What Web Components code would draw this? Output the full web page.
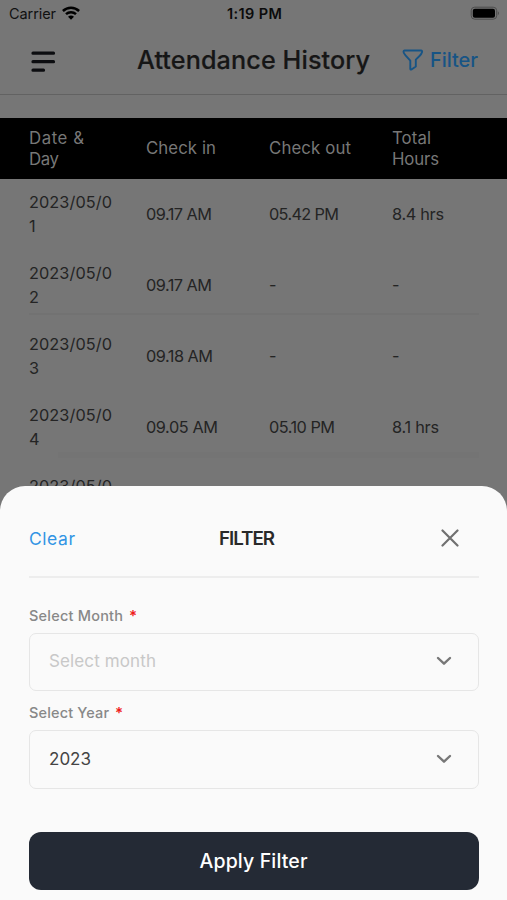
<!DOCTYPE html>
<html lang="en">
<head>
<meta charset="utf-8">
<title>Attendance History</title>
<style>
html,body{margin:0;height:900px;overflow:hidden;background:#767676}
body{font-family:Inter,"Liberation Sans",sans-serif}
</style>
</head>
<body>
<attendance-app></attendance-app>
<script>
const define = (name, html, setup) => customElements.define(name, class extends HTMLElement {
  connectedCallback() {
    if (this.shadowRoot) return;
    this.attachShadow({mode: 'open'}).innerHTML = html;
    if (setup) setup.call(this, this.shadowRoot);
  }
});

/* Text tracked out or in so that it spans the width given in "w". */
define('tracked-text', `<style>:host{display:inline-block;white-space:pre}span{display:inline-block}</style><span></span>`, function (root) {
  const s = root.querySelector('span');
  s.textContent = this.getAttribute('text');
  const w = +this.getAttribute('w');
  if (!w) return;
  const n = s.textContent.length;
  s.style.letterSpacing = n > 1 ? (w - s.getBoundingClientRect().width) / (n - 1) + 'px' : '0';
  this.style.width = w + 'px';
});

define('status-bar', `<style>
:host{display:grid;grid-template-columns:1fr auto 1fr;align-items:center;height:28px;padding:0 7px 2px 9px;box-sizing:border-box;font-size:14.5px;color:#111}
.l{display:flex;align-items:center;gap:6px}.t{font-weight:600;color:#0b0b0b}.r{justify-self:end;display:flex}
</style>
<div class="l"><tracked-text text="Carrier" w="47"></tracked-text>
<svg width="18" height="14" viewBox="0 0 18 14" fill="none" stroke="#000" stroke-width="2.5"><path d="M.9 5C5.5.7 12.500.7 17.100 5M4 8.200C6.800 5.600 11.200 5.600 14 8.200"/><path d="M9 13.700 6 10.700Q9 8.300 12 10.700Z" fill="#000" stroke="none"/></svg></div>
<tracked-text class="t" text="1:19 PM" w="55"></tracked-text>
<div class="r"><svg width="30" height="15" viewBox="0 0 30 15"><rect x="1.200" y="1.200" width="25.500" height="12" rx="3.500" fill="none" stroke="#4c4c4c"/><rect x="2.800" y="2.800" width="22.200" height="8.900" rx="2" fill="#000"/><path d="M27.900 5.200Q30 7.200 27.900 9.200Z" fill="#4c4c4c"/></svg></div>`);

define('nav-bar', `<style>
:host{display:grid;grid-template-columns:106px 233px 1fr;align-items:center;height:67px;padding:0 29px 3px 31px;box-sizing:border-box;border-bottom:1.500px solid #626262}
svg{display:block}.t{font-size:25.200px;font-weight:500;color:#161616;-webkit-text-stroke:.2px #161616;padding-top:1px}
.f{display:flex;justify-content:flex-end;align-items:center;gap:6px;color:#175485;font-size:20px;font-weight:500}.m{padding-top:4px}
</style>
<svg class="m" width="25" height="22" viewBox="0 0 25 22" stroke="#0c0d10" stroke-width="3.200" stroke-linecap="round"><path d="M2 2.200H22.500M2 10.700H22.500M2 19.200H12.500"/></svg>
<tracked-text class="t" text="Attendance History" w="233"></tracked-text>
<div class="f"><svg width="22" height="22" viewBox="0 0 22 22" fill="none" stroke="currentColor" stroke-width="1.900" stroke-linejoin="round"><path d="M2.500 1.500H19Q20.500 1.600 20 3.300Q19.500 5.100 17.500 7L13.800 10.700V17.500L9.500 20.500Q8.500 21 8.300 19.800V11.700L3.500 6.300Q1.200 3.800 1.500 2.400Q1.700 1.500 2.500 1.500Z"/></svg><tracked-text text="Filter" w="48"></tracked-text></div>`);

define('table-head', `<style>
:host{display:grid;grid-template-columns:117px 123px 123px 1fr;align-items:center;height:61px;padding:0 0 0 29px;box-sizing:border-box;background:#000;color:#777;font-size:16.800px;line-height:21px}
div{display:flex;flex-direction:column}
</style>
<div><tracked-text text="Date &amp;" w="55"></tracked-text><tracked-text text="Day" w="30"></tracked-text></div>
<tracked-text text="Check in" w="70"></tracked-text><tracked-text text="Check out" w="82"></tracked-text>
<div><tracked-text text="Total" w="39"></tracked-text><tracked-text text="Hours" w="47"></tracked-text></div>`);

define('table-row', `<style>
:host{display:grid;grid-template-columns:117px 123px 123px 1fr;align-items:center;height:70.900px;padding:1px 28px 0 29px;box-sizing:border-box;color:#242424;font-size:16px;line-height:23.500px}
.d{display:flex;flex-direction:column}.d,.v{font-size:16.300px}
</style><div class="d"></div>`, function (root) {
  const [day, ...cells] = this.getAttribute('data').split('|');
  const add = (p, t, w) => { const e = document.createElement('tracked-text'); e.setAttribute('text', t); e.setAttribute('w', w); e.className = 'v'; p.append(e); };
  const d = root.querySelector('.d');
  add(d, '2023/05/0', 83); add(d, day, 10);
  cells.forEach(c => { const [t, w] = c.split('~'); add(root, t, w || 8); });
});

define('select-field', `<style>
:host{display:block}
.l{display:flex;height:20px;align-items:center;gap:6px;color:#888;font-size:14.500px;font-weight:500}
.l b{color:#ef1a1a;font-weight:600;font-size:15px}
.b{margin-top:8px;height:var(--field-height,58px);box-sizing:border-box;border:1.300px solid #e6e6e6;border-radius:7px;display:flex;align-items:center;justify-content:space-between;padding:0 26px 2px 19px;font-size:17px;color:var(--value-color,#c8c8c8)}
</style><div class="l"><slot name="label"></slot><b>*</b></div><div class="b"><slot></slot>
<svg width="16" height="10" viewBox="0 0 16 10" fill="none" stroke="#777" stroke-width="2.400" stroke-linecap="round" stroke-linejoin="round"><path d="M2 2 8 7.700 14 2"/></svg></div>`);

define('filter-sheet', `<style>
:host{display:block;box-sizing:border-box;background:#fafafa;border-radius:25px 25px 0 0;padding:0 28px 0 29px}
header{display:grid;grid-template-columns:190px 56px 1fr;align-items:center;height:92px;padding-top:14px;box-sizing:border-box;border-bottom:2px solid #ededed}
.c{font-size:17.500px;color:#3194e4}.t{font-size:18.800px;font-weight:600;color:#292929;padding-top:1px}.x{justify-self:end;margin-right:20px}
.m{margin-top:27px}.y{margin-top:11px;--value-color:#444;--field-height:59px}
button{display:flex;align-items:center;justify-content:center;width:100%;height:58px;margin-top:43px;border:0;border-radius:12px;background:#242a35;color:#fff;font:500 19.500px Inter,sans-serif;padding:0 1px 0 0}
</style>
<header><tracked-text class="c" text="Clear" w="46"></tracked-text><tracked-text class="t" text="FILTER" w="56"></tracked-text>
<svg class="x" width="18" height="18" viewBox="0 0 18 18" stroke="#707070" stroke-width="2.200" stroke-linecap="round"><path d="M1.500 1.500 16.500 16.500M16.500 1.500 1.500 16.500"/></svg></header>
<select-field class="m"><tracked-text slot="label" text="Select Month" w="94"></tracked-text><tracked-text text="Select month" w="107"></tracked-text></select-field>
<select-field class="y"><tracked-text slot="label" text="Select Year" w="80"></tracked-text><tracked-text text="2023" w="42"></tracked-text></select-field>
<button><tracked-text text="Apply Filter" w="108"></tracked-text></button>`);

define('attendance-app', `<style>
:host{display:block;position:relative;width:507px;height:900px;overflow:hidden;background:#767676}
table-head{margin-top:23px}
.rule{height:2px;margin:-8px 28px 6px 29px;background:#727272}
.faint{height:6px;margin:-11px 28px 5px 58px;background:#747474}
filter-sheet{position:absolute;left:0;right:0;top:486px;height:414px}
</style>
<status-bar></status-bar><nav-bar></nav-bar><table-head></table-head>
<table-row data="1|09.17 AM~66|05.42 PM~70|8.4 hrs~52"></table-row>
<table-row data="2|09.17 AM~66|-|-"></table-row>
<div class="rule"></div>
<table-row data="3|09.18 AM~67|-|-"></table-row>
<table-row data="4|09.05 AM~72|05.10 PM~66|8.1 hrs~47"></table-row>
<div class="faint"></div>
<table-row data="5|09.10 AM~66|-|-"></table-row>
<filter-sheet></filter-sheet>`);
</script>
</body>
</html>
